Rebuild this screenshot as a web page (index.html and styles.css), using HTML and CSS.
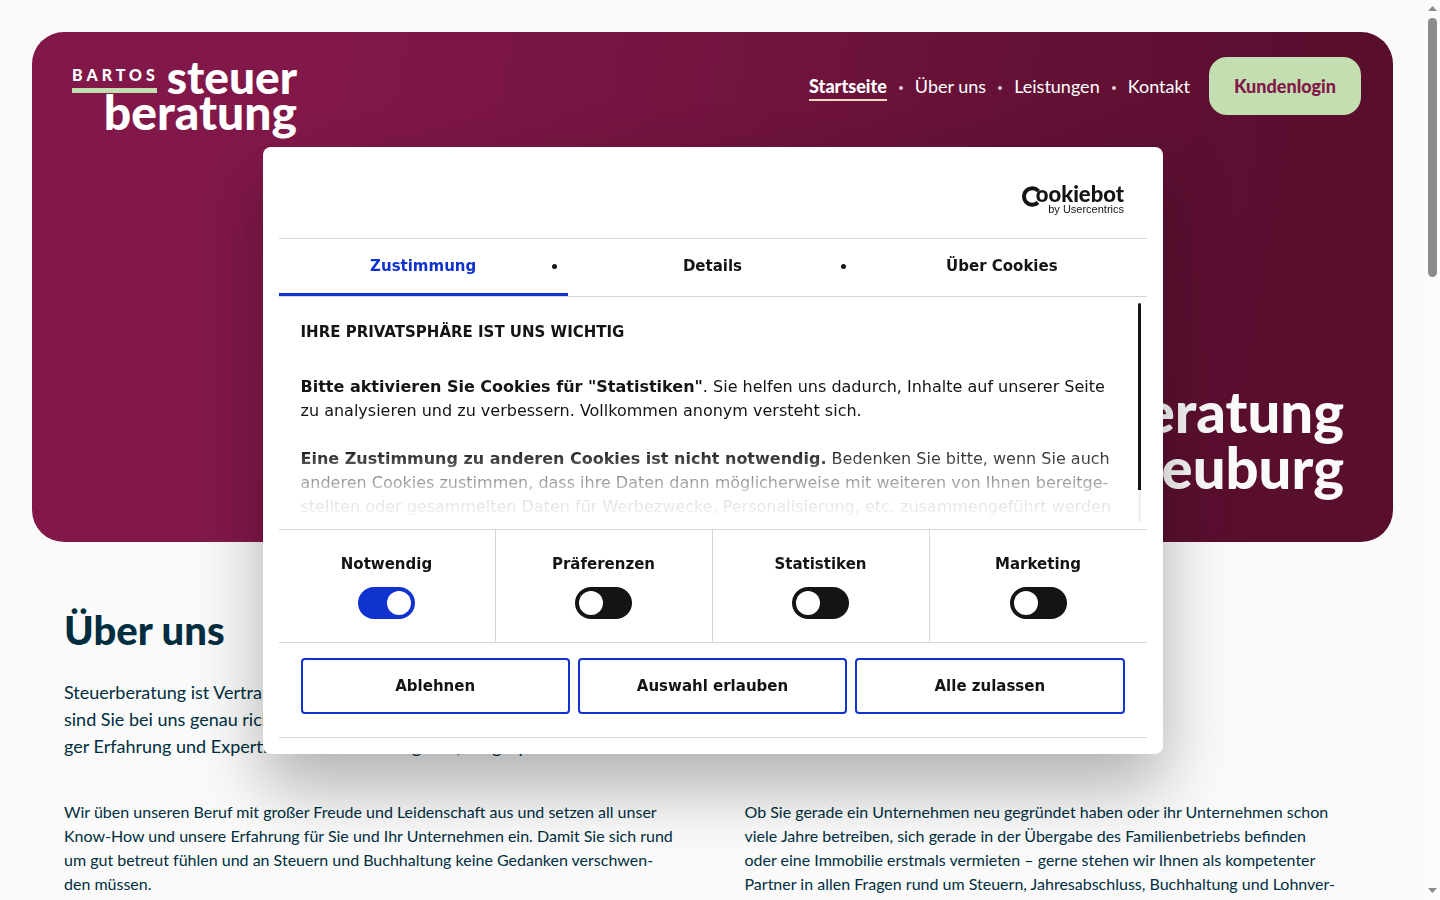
FILE: index.html
```html
<!DOCTYPE html>
<html lang="de">

<head>
    <meta charset="UTF-8">
    <meta name="viewport" content="width=device-width, initial-scale=1.0">
    <title>Bartos Steuerberatung</title>
    <link rel="stylesheet" href="styles.css">
</head>

<body>
    <div class="page">
        <header class="hero">
            <div class="topbar">
                <a class="logo" href="#" aria-label="Bartos Steuerberatung">
                    <svg width="228" height="96" viewBox="0 0 228 96">
                        <text class="logo-small" x="0" y="33">BARTOS</text>
                        <rect x="0" y="40" width="85" height="5" fill="#c3deb1" />
                        <text class="logo-top" x="225" y="46" text-anchor="end">steuer</text>
                        <text class="logo-bottom" x="225" y="82" text-anchor="end">beratung</text>
                    </svg>
                </a>
                <nav class="nav">
                    <a class="active" href="#">Startseite</a>
                    <a href="#">Über uns</a>
                    <a href="#">Leistungen</a>
                    <a href="#">Kontakt</a>
                </nav>
                <a class="login" href="#">Kundenlogin</a>
            </div>
            <h1>Steuerberatung<br>Klosterneuburg</h1>
        </header>

        <main class="about">
            <h2>Über uns</h2>
            <p class="lead">Steuerberatung ist Vertrauenssache. Bei uns<br>
                sind Sie bei uns genau richtig. Mit langjähri-<br>
                ger Erfahrung und Expertise beraten wir Sie gerne, ausgesprochen</p>
            <div class="columns">
                <p>Wir üben unseren Beruf mit großer Freude und Leidenschaft aus und setzen all unser<br>
                    Know-How und unsere Erfahrung für Sie und Ihr Unternehmen ein. Damit Sie sich rund<br>
                    um gut betreut fühlen und an Steuern und Buchhaltung keine Gedanken verschwen-<br>
                    den müssen.</p>
                <p>Ob Sie gerade ein Unternehmen neu gegründet haben oder ihr Unternehmen schon<br>
                    viele Jahre betreiben, sich gerade in der Übergabe des Familienbetriebs befinden<br>
                    oder eine Immobilie erstmals vermieten – gerne stehen wir Ihnen als kompetenter<br>
                    Partner in allen Fragen rund um Steuern, Jahresabschluss, Buchhaltung und Lohnver-</p>
            </div>
        </main>
    </div>

    <div class="overlay">
        <div class="dialog" role="dialog" aria-label="Cookies">
            <div class="dialog-header">
                <svg width="104" height="40" viewBox="0 0 104 40" role="img" aria-label="Cookiebot by Usercentrics">
                    <path d="M17.500 14A8.300 8.300 0 1 0 17 25.500" fill="none" stroke="#141414" stroke-width="4" />
                    <text class="cb-name" x="103" y="25" text-anchor="end">ookiebot</text>
                    <text class="cb-by" x="103" y="36" text-anchor="end">by Usercentrics</text>
                </svg>
            </div>

            <ul class="tabs">
                <li><button class="tab selected" type="button">Zustimmung</button></li>
                <li><button class="tab" type="button">Details</button></li>
                <li><button class="tab" type="button">Über Cookies</button></li>
            </ul>

            <div class="dialog-body">
                <div class="dialog-text">
                    <h3>IHRE PRIVATSPHÄRE IST UNS WICHTIG</h3>
                    <p><strong>Bitte aktivieren Sie Cookies für "Statistiken"</strong>. Sie helfen uns dadurch, Inhalte auf unserer Seite<br>
                        zu analysieren und zu verbessern. Vollkommen anonym versteht sich.</p>
                    <p><strong>Eine Zustimmung zu anderen Cookies ist nicht notwendig.</strong> Bedenken Sie bitte, wenn Sie auch<br>
                        anderen Cookies zustimmen, dass ihre Daten dann möglicherweise mit weiteren von Ihnen bereitge-<br>
                        stellten oder gesammelten Daten für Werbezwecke, Personalisierung, etc. zusammengeführt werden</p>
                </div>
                <div class="fade"></div>
                <div class="dialog-scroll"></div>
            </div>

            <div class="toggles">
                <label class="toggle">Notwendig<input type="checkbox" checked></label>
                <label class="toggle">Präferenzen<input type="checkbox"></label>
                <label class="toggle">Statistiken<input type="checkbox"></label>
                <label class="toggle">Marketing<input type="checkbox"></label>
            </div>

            <div class="buttons">
                <button type="button">Ablehnen</button>
                <button type="button">Auswahl erlauben</button>
                <button type="button">Alle zulassen</button>
            </div>
        </div>
    </div>

    <div class="scrollbar">
        <svg width="9" height="5" viewBox="0 0 9 5"><path d="M0 5L4.500 0L9 5Z" fill="#8b8b8b" /></svg>
        <div class="thumb"></div>
        <svg class="down" width="9" height="5" viewBox="0 0 9 5"><path d="M0 0L4.500 5L9 0Z" fill="#8b8b8b" /></svg>
    </div>
</body>

</html>
```
FILE: styles.css
```css
* {
    margin: 0;
    padding: 0;
    box-sizing: border-box;
}

body {
    height: 100vh;
    overflow: hidden;
    background: #fafafa;
    color: #002e40;
    font-family: Lato, "Open Sans", sans-serif;
}

a {
    color: inherit;
    text-decoration: none;
}

.page {
    margin-right: 15px;
    padding: 32px 32px 0;
}

/* hero */
.hero {
    display: flex;
    flex-direction: column;
    justify-content: space-between;
    min-height: 510px;
    padding: 16px 32px 47px 40px;
    border-radius: 32px;
    background: linear-gradient(100deg, #82184a 0%, #82184a 20%, #590e2e 90%);
    color: #fff;
}

.topbar {
    display: flex;
    align-items: flex-start;
}

.logo {
    margin-right: auto;
}

.logo svg {
    display: block;
}

.logo-small {
    fill: #fff;
    font-size: 16px;
    font-weight: 900;
    letter-spacing: 4px;
}

.logo-top {
    fill: #fff;
    font-size: 46px;
    font-weight: 900;
}

.logo-bottom {
    fill: #fff;
    font-size: 48px;
    font-weight: 900;
}

.nav {
    display: flex;
    align-items: center;
    height: 60px;
    margin: 9px 19px 0 0;
    font-size: 18px;
}

.nav a {
    padding: 2px 0;
    border-bottom: 2px solid transparent;
}

.nav a.active {
    border-color: #f0d9c4;
    font-weight: 900;
}

.nav a + a {
    margin-left: 28px;
}

.nav a + a::before {
    content: "";
    float: left;
    width: 4px;
    height: 4px;
    margin: 11px 0 0 -16px;
    border-radius: 50%;
    background: #e6c8cf;
}

.login {
    margin-top: 9px;
    padding: 0 25px;
    border-radius: 18px;
    background: #c3deb1;
    color: #82184a;
    font-size: 18px;
    font-weight: 900;
    line-height: 58px;
}

.hero h1 {
    padding-right: 17px;
    color: #fafafa;
    font-size: 58px;
    font-weight: 900;
    line-height: 56px;
    text-align: right;
}

/* about */
.about {
    padding: 64px 32px 0;
    white-space: nowrap;
}

.about h2 {
    margin-bottom: 24px;
    font-size: 40px;
    font-weight: 900;
    line-height: 49px;
}

.lead {
    margin-bottom: 40px;
    font-size: 18px;
    line-height: 27px;
}

.columns {
    display: grid;
    grid-template-columns: 1fr 1fr;
    gap: 64px;
    font-size: 16px;
    line-height: 24px;
}

/* cookie dialog */
.overlay {
    position: fixed;
    inset: 0 15px 0 0;
    display: flex;
    align-items: center;
    justify-content: center;
    color: #141414;
    font-family: "DejaVu Sans", Verdana, sans-serif;
    font-size: 15px;
}

.dialog {
    width: 900px;
    max-width: 100%;
    padding: 0 16px 16px;
    border-radius: 8px;
    background: #fff;
    box-shadow: 0 32px 68px rgba(0, 0, 0, 0.3);
}

.dialog-header {
    display: flex;
    justify-content: flex-end;
    padding: 30px 22px 21px;
}

.cb-name {
    font-family: Lato, sans-serif;
    font-size: 22px;
    font-weight: 900;
    fill: #141414;
}

.cb-by {
    font-family: "Liberation Sans", Arial, sans-serif;
    font-size: 11px;
    fill: #141414;
}

.tabs {
    display: grid;
    grid-template-columns: repeat(3, 1fr);
    border-top: 1px solid #d6d6d6;
    border-bottom: 1px solid #d6d6d6;
    list-style: none;
}

.tabs li {
    position: relative;
}

.tabs li + li::before {
    content: "";
    position: absolute;
    top: 25px;
    left: -16px;
    width: 5px;
    height: 5px;
    border-radius: 50%;
    background: #141414;
}

.tab {
    width: 100%;
    height: 57px;
    border: none;
    border-bottom: 3px solid transparent;
    background: none;
    color: inherit;
    font: bold 15px "DejaVu Sans", Verdana, sans-serif;
}

.tab.selected {
    border-color: #1032cf;
    color: #1032cf;
}

.dialog-body {
    position: relative;
    height: 232px;
    padding: 23px 22px;
    overflow: hidden;
    line-height: 24px;
    white-space: nowrap;
}

.dialog-text h3 {
    margin-bottom: 31px;
    font-size: 15px;
}

.dialog-text p {
    margin-bottom: 24px;
    font-size: 16px;
}

.fade {
    position: absolute;
    bottom: 0;
    left: 0;
    right: 24px;
    height: 80px;
    background: linear-gradient(rgba(255, 255, 255, 0), rgba(255, 255, 255, 0.85) 60%, #fff);
}

.dialog-scroll {
    position: absolute;
    top: 6px;
    bottom: 6px;
    right: 6px;
    width: 3px;
    border-radius: 3px;
    background: linear-gradient(#141414 85%, #f0f0f0 85%);
}

.toggles {
    display: grid;
    grid-template-columns: repeat(4, 1fr);
    border-top: 1px solid #d6d6d6;
    border-bottom: 1px solid #d6d6d6;
}

.toggle {
    display: flex;
    flex-direction: column;
    align-items: center;
    gap: 11px;
    padding: 22px 0 23px;
    border-right: 1px solid #d6d6d6;
    font-weight: bold;
    line-height: 24px;
}

.toggle:last-child {
    border-right: none;
}

.toggle input {
    appearance: none;
    width: 57px;
    height: 32px;
    padding: 4px;
    border-radius: 16px;
    background: #141414;
}

.toggle input::before {
    content: "";
    display: block;
    width: 24px;
    height: 24px;
    border-radius: 50%;
    background: #fff;
}

.toggle input:checked {
    background: #1032cf;
}

.toggle input:checked::before {
    margin-left: auto;
}

.buttons {
    display: grid;
    grid-template-columns: repeat(3, 1fr);
    gap: 8px;
    padding: 15px 22px 23px;
    border-bottom: 1px solid #d6d6d6;
}

.buttons button {
    height: 56px;
    border: 2px solid #1032cf;
    border-radius: 4px;
    background: none;
    color: inherit;
    font: bold 15px "DejaVu Sans", Verdana, sans-serif;
}

/* page scrollbar */
.scrollbar {
    position: fixed;
    top: 0;
    right: 0;
    bottom: 0;
    display: flex;
    flex-direction: column;
    align-items: center;
    width: 15px;
    padding: 6px 0 7px;
    background: #fcfcfc;
}

.thumb {
    width: 9px;
    height: 259px;
    margin-top: 7px;
    border-radius: 5px;
    background: #8b8b8b;
}

.down {
    margin-top: auto;
}
```
